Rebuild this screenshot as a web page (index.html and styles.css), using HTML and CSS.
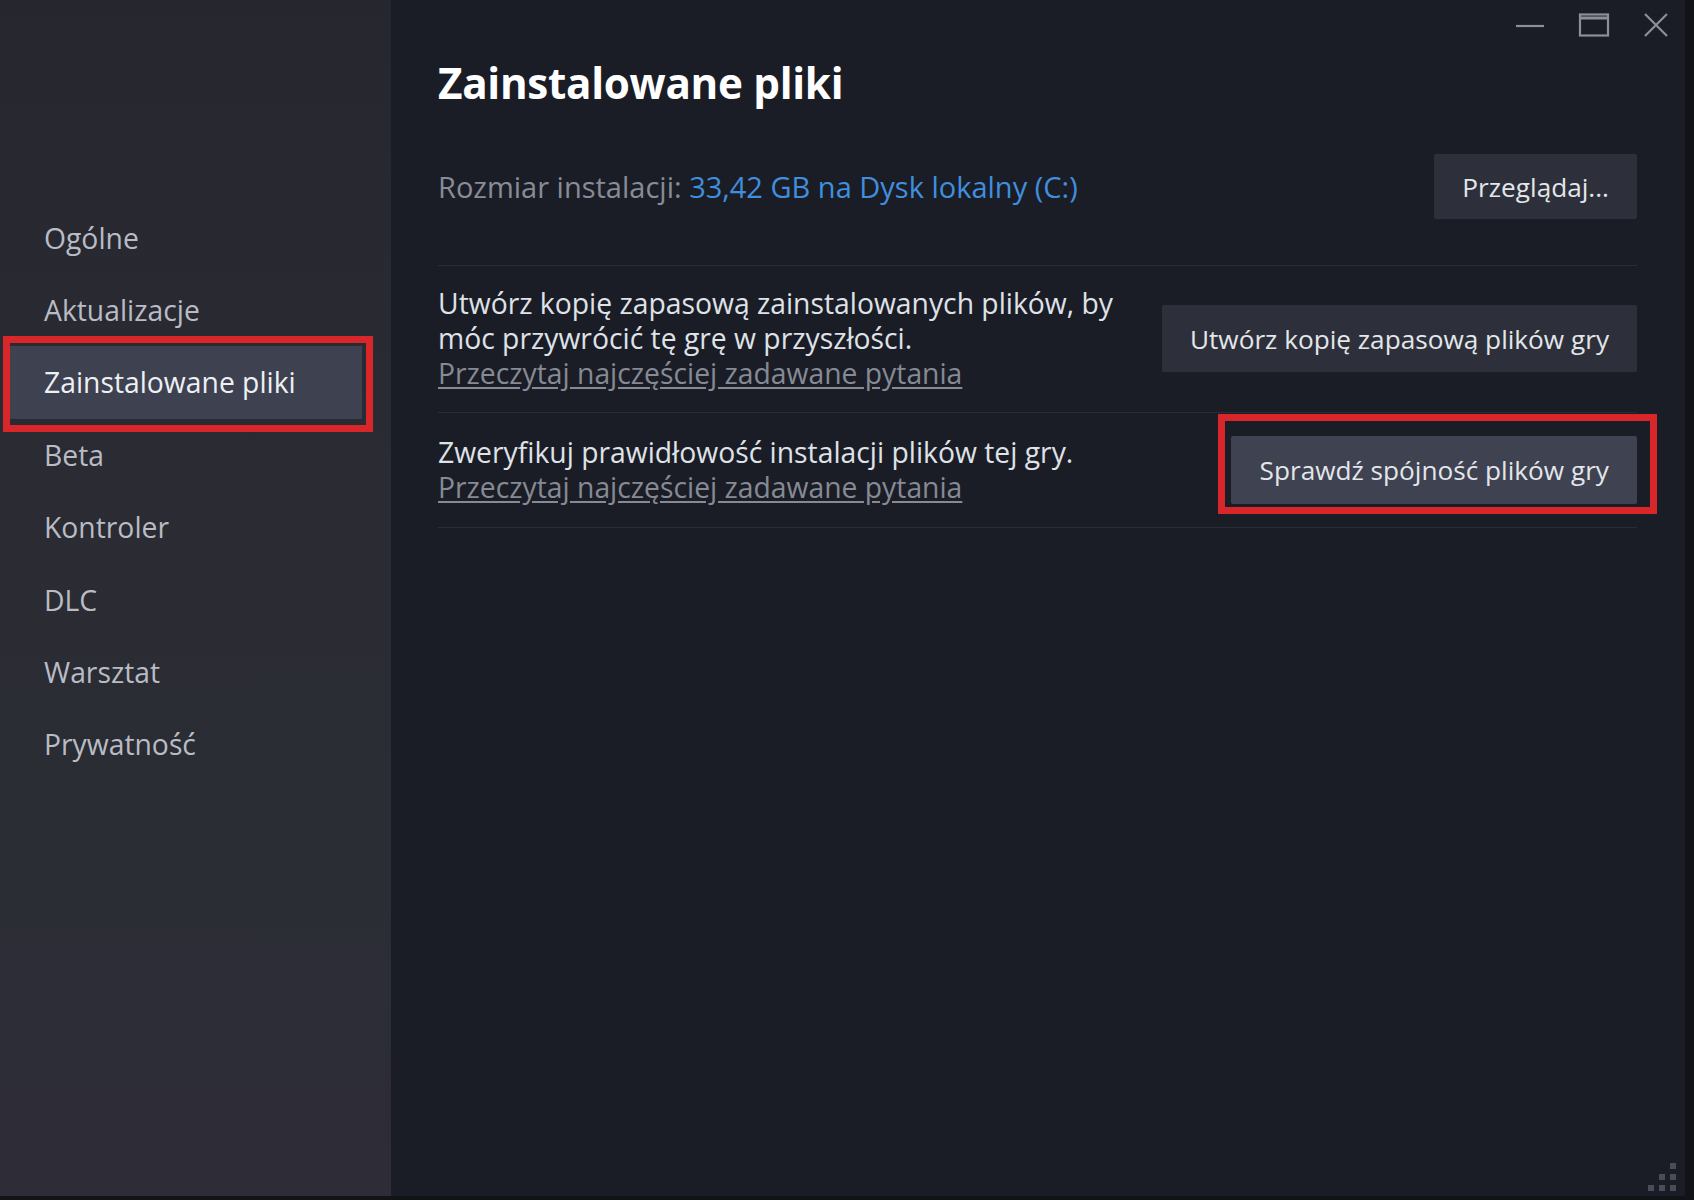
FILE: index.html
```html
<!DOCTYPE html>
<html lang="pl">
<head>
<meta charset="utf-8">
<title>Zainstalowane pliki</title>
<link rel="stylesheet" href="styles.css">
</head>
<body>
<div class="window">
  <aside class="sidebar">
    <nav class="nav">
      <div class="nav-item">Ogólne</div>
      <div class="nav-item">Aktualizacje</div>
      <div class="nav-item active">Zainstalowane pliki<span class="mark mark-nav"></span></div>
      <div class="nav-item">Beta</div>
      <div class="nav-item">Kontroler</div>
      <div class="nav-item">DLC</div>
      <div class="nav-item">Warsztat</div>
      <div class="nav-item">Prywatność</div>
    </nav>
  </aside>
  <main class="main">
    <div class="controls">
      <svg class="ctl" width="30" height="24" viewBox="0 0 30 24"><line x1="1" y1="13" x2="29" y2="13" stroke="#8b9098" stroke-width="2.2"/></svg>
      <svg class="ctl" width="32" height="24" viewBox="0 0 32 24"><rect x="2" y="1.5" width="28" height="21" fill="none" stroke="#8b9098" stroke-width="2.2"/><line x1="2" y1="5" x2="30" y2="5" stroke="#8b9098" stroke-width="3"/></svg>
      <svg class="ctl" width="26" height="24" viewBox="0 0 26 24"><path d="M2 1 L24 23 M24 1 L2 23" stroke="#8b9098" stroke-width="2.2" fill="none"/></svg>
    </div>
    <h1 class="title">Zainstalowane pliki</h1>
    <div class="size-row">
      <div class="size-text"><span class="muted">Rozmiar instalacji:</span> <span class="blue">33,42 GB na Dysk lokalny (C:)</span></div>
      <button class="btn btn-a">Przeglądaj...</button>
    </div>
    <div class="section sec-backup">
      <div class="sec-text">
        <div>Utwórz kopię zapasową zainstalowanych plików, by<br>móc przywrócić tę grę w przyszłości.</div>
        <a class="link">Przeczytaj najczęściej zadawane pytania</a>
      </div>
      <button class="btn btn-b">Utwórz kopię zapasową plików gry</button>
    </div>
    <div class="section sec-verify">
      <div class="sec-text">
        <div>Zweryfikuj prawidłowość instalacji plików tej gry.</div>
        <a class="link">Przeczytaj najczęściej zadawane pytania</a>
      </div>
      <button class="btn btn-c">Sprawdź spójność plików gry<span class="mark mark-btn"></span></button>
    </div>
    <div class="grip">
      <span class="dot d1"></span><span class="dot d2"></span><span class="dot d3"></span>
      <span class="dot d4"></span><span class="dot d5"></span><span class="dot d6"></span>
    </div>
  </main>
</div>
</body>
</html>
```
FILE: styles.css
```css
* { box-sizing: border-box; }
html, body { margin: 0; padding: 0; }
body {
  background: #121316;
  width: 1694px;
  height: 1200px;
  overflow: hidden;
  font-family: "Open Sans", "Noto Sans", sans-serif;
}
.window {
  display: flex;
  width: 1685px;
  height: 1196px;
  background: #1b1d26;
  position: relative;
}
.sidebar {
  width: 391px;
  flex: none;
  background: linear-gradient(180deg, #26272e 0%, #2a2b33 40%, #2b2d35 75%, #2e2c37 100%);
  padding-top: 201.5px;
}
.nav { display: flex; flex-direction: column; }
.nav-item {
  position: relative;
  height: 72.4px;
  margin: 0 29px 0 10px;
  padding-left: 34px;
  display: flex;
  align-items: center;
  font-size: 28.3px;
  color: #b9bcc5;
}
.nav-item.active {
  background: #3d4150;
  color: #eef0f3;
}
.mark {
  position: absolute;
  border: 7px solid #d8262b;
  pointer-events: none;
}
.mark-nav { left: -7px; top: -10px; right: -11px; bottom: -13px; }
.main {
  flex: 1;
  position: relative;
  padding: 58px 48px 0 47px;
  color: #dfe2e6;
}
.controls {
  position: absolute;
  top: 13px;
  right: 16px;
  display: flex;
  gap: 33px;
  align-items: flex-start;
}
.title {
  margin: 0;
  font-size: 42.2px;
  line-height: 50px;
  font-weight: 700;
  color: #ffffff;
  letter-spacing: -0.3px;
}
.size-row {
  margin-top: 46px;
  display: flex;
  align-items: center;
  justify-content: space-between;
  padding-bottom: 46px;
  border-bottom: 1px solid #2a2d37;
}
.size-text { font-size: 29px; }
.muted { color: #878c96; }
.blue { color: #3f8fde; }
.btn {
  position: relative;
  border: none;
  font-family: inherit;
  font-size: 26.2px;
  color: #e3e6ea;
  padding: 0 28px;
  background: #2d303a;
  border-radius: 2px;
}
.btn-a { height: 65px; }
.btn-b { height: 67px; }
.btn-c { height: 68px; background: #3e4251; padding: 0 28px 0 29px; }
.mark-btn { left: -13px; top: -22px; right: -20px; bottom: -10px; }
.section {
  display: flex;
  align-items: center;
  justify-content: space-between;
  border-bottom: 1px solid #2a2d37;
  font-size: 28.3px;
  line-height: 35px;
}
.sec-backup { padding: 20px 0 21px; }
.sec-verify { padding: 22px 0 22px; }
.link {
  display: block;
  color: #858a94;
  text-decoration: underline;
  text-underline-offset: 3px;
}
.grip {
  position: absolute;
  right: 5px;
  bottom: 5px;
  width: 30px;
  height: 30px;
}
.dot {
  position: absolute;
  width: 6px;
  height: 6px;
  background: #4a4d57;
}
.d1 { right: 4px; top: 2px; }
.d2 { right: 15px; top: 13px; }
.d3 { right: 4px; top: 13px; }
.d4 { right: 26px; top: 24px; }
.d5 { right: 15px; top: 24px; }
.d6 { right: 4px; top: 24px; }
```
